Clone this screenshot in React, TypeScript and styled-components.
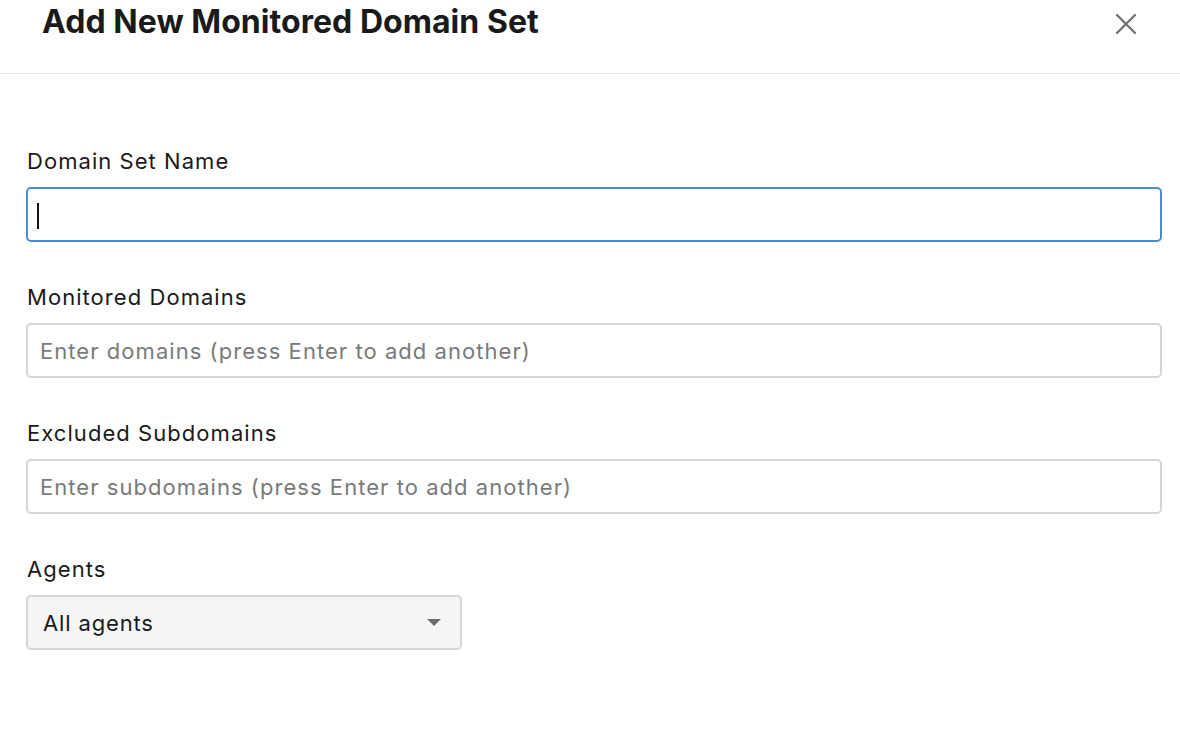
import React from "react";
import styled, { createGlobalStyle } from "styled-components";

const Global = createGlobalStyle`
  html, body { margin: 0; padding: 0; background: #ffffff; }
  body { font-family: Inter, "Noto Sans", sans-serif; color: #1a1a1a; }
  * { box-sizing: border-box; }
`;

const Dialog = styled.div`
  width: 1180px;
  height: 756px;
  background: #fff;
  display: flex;
  flex-direction: column;
`;

const Header = styled.div`
  height: 74px;
  border-bottom: 1px solid #e8e8e8;
  display: flex;
  align-items: flex-start;
  justify-content: space-between;
  padding: 0 41px 0 42px;
`;

const Title = styled.h1`
  margin: 0;
  margin-top: 2px;
  font-size: 32px;
  line-height: 40px;
  font-weight: 700;
  color: #1a1a1a;
  letter-spacing: 0.05px;
`;

const CloseButton = styled.button`
  border: none;
  background: none;
  padding: 0;
  margin-top: 11px;
  width: 26px;
  height: 26px;
  display: flex;
  align-items: center;
  justify-content: center;
  cursor: pointer;
`;

const Body = styled.div`
  padding: 73px 18px 0 26px;
  display: flex;
  flex-direction: column;
  gap: 41px;
`;

const Field = styled.div`
  display: flex;
  flex-direction: column;
  gap: 12px;
`;

const Label = styled.label`
  font-size: 22px;
  line-height: 28px;
  padding-left: 1px;
  letter-spacing: 1.05px;
  color: #1a1a1a;
`;

const InputWrap = styled.div`
  position: relative;
`;

const TextInput = styled.input<{ $focused?: boolean }>`
  display: block;
  width: 100%;
  height: 55px;
  border-radius: 5px;
  border: ${(p) => (p.$focused ? "2px solid #4a8bcb" : "2px solid #d6d6d6")};
  padding: 0 12px;
  font-family: Inter, "Noto Sans", sans-serif;
  font-size: 22px;
  letter-spacing: 1.05px;
  color: #1a1a1a;
  background: #fff;
  outline: none;
  caret-color: #000;
  &::placeholder { color: #7a7a7a; }
`;

const Caret = styled.span`
  position: absolute;
  left: 11px;
  top: 16px;
  width: 2px;
  height: 26px;
  background: #111;
`;

const Select = styled.div`
  width: 436px;
  height: 55px;
  border-radius: 5px;
  border: 2px solid #d6d6d6;
  background: #f5f5f5;
  display: flex;
  align-items: center;
  justify-content: space-between;
  padding: 0 19px 0 15px;
  font-size: 22px;
  letter-spacing: 0.85px;
  color: #1a1a1a;
`;

const Arrow = styled.span`
  width: 0;
  height: 0;
  border-left: 7px solid transparent;
  border-right: 7px solid transparent;
  border-top: 7px solid #6e6e6e;
`;

export default function App() {
  return (
    <>
      <Global />
      <Dialog>
        <Header>
          <Title>Add New Monitored Domain Set</Title>
          <CloseButton aria-label="Close">
            <svg width="22" height="22" viewBox="0 0 22 22">
              <path d="M2 2 L20 20 M20 2 L2 20" stroke="#737373" strokeWidth="2.4" strokeLinecap="round" />
            </svg>
          </CloseButton>
        </Header>
        <Body>
          <Field>
            <Label>Domain Set Name</Label>
            <InputWrap>
              <TextInput $focused />
              <Caret />
            </InputWrap>
          </Field>
          <Field>
            <Label>Monitored Domains</Label>
            <TextInput placeholder="Enter domains (press Enter to add another)" />
          </Field>
          <Field>
            <Label>Excluded Subdomains</Label>
            <TextInput placeholder="Enter subdomains (press Enter to add another)" />
          </Field>
          <Field>
            <Label>Agents</Label>
            <Select>
              <span>All agents</span>
              <Arrow />
            </Select>
          </Field>
        </Body>
      </Dialog>
    </>
  );
}
